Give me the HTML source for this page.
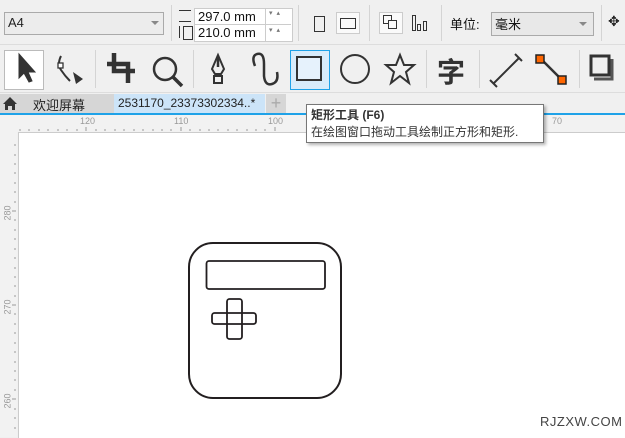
<!DOCTYPE html><html><head><meta charset="utf-8"><style>
body{margin:0;width:625px;height:437px;overflow:hidden;background:#f0f0f0;font-family:"Liberation Sans","Noto Sans CJK SC",sans-serif;position:relative}
.a{position:absolute}
.box{position:absolute;background:#fff;border:1px solid #bbb}
.sep{position:absolute;width:1px;background:#d4d4d4}
</style></head><body>
<!-- property bar -->
<div class="a" style="left:0;top:0;width:625px;height:44px;background:#f0f0f0;border-bottom:1px solid #ddd"></div>
<div class="box" style="left:4px;top:12px;width:158px;height:21px;background:#ececec;border-color:#aaa"></div>
<div class="a" style="left:8px;top:15px;font-size:13px;color:#222">A4</div>
<div class="a" style="left:151px;top:21px;border-left:4px solid transparent;border-right:4px solid transparent;border-top:4px solid #888"></div>
<div class="sep" style="left:171px;top:5px;height:36px"></div>
<div class="a" style="left:179px;top:10px;width:12px;height:10px;border-top:1px solid #333;border-bottom:1px solid #333"></div>
<div class="a" style="left:183px;top:26px;width:8px;height:12px;border-left:1px solid #333;border-right:1px solid #333;border-top:1px solid #333;border-bottom:1px solid #333"></div>
<div class="a" style="left:179px;top:26px;width:1px;height:12px;background:#333"></div>
<div class="box" style="left:194px;top:8px;width:97px;height:32px;border-color:#ccc"></div>
<div class="a" style="left:195px;top:24px;width:96px;height:1px;background:#ccc"></div>
<div class="a" style="left:265px;top:8px;width:1px;height:33px;background:#ccc"></div>
<div class="a" style="left:198px;top:9px;font-size:13px;color:#111">297.0 mm</div>
<div class="a" style="left:198px;top:25px;font-size:13px;color:#111">210.0 mm</div>
<div class="a" style="left:269px;top:9px;font-size:7px;color:#777;letter-spacing:4px">▾▴</div>
<div class="a" style="left:269px;top:26px;font-size:7px;color:#777;letter-spacing:4px">▾▴</div>
<div class="sep" style="left:298px;top:5px;height:36px"></div>
<div class="a" style="left:314px;top:16px;width:9px;height:14px;border:1px solid #333"></div>
<div class="a" style="left:336px;top:12px;width:22px;height:20px;border:1px solid #ccc;background:#fafafa"></div>
<div class="a" style="left:340px;top:18px;width:14px;height:9px;border:1px solid #333"></div>
<div class="sep" style="left:369px;top:5px;height:36px"></div>
<div class="a" style="left:379px;top:12px;width:22px;height:20px;border:1px solid #ccc;background:#fafafa"></div>
<div class="a" style="left:383px;top:15px;width:7px;height:7px;border:1px solid #333"></div>
<div class="a" style="left:388px;top:20px;width:7px;height:7px;border:1px solid #333;background:#fafafa"></div>
<div class="a" style="left:412px;top:15px;width:2px;height:14px;border:1px solid #333"></div>
<div class="a" style="left:417px;top:24px;width:2px;height:5px;border:1px solid #333"></div>
<div class="a" style="left:423px;top:21px;width:2px;height:8px;border:1px solid #333"></div>
<div class="sep" style="left:441px;top:5px;height:36px"></div>
<div class="a" style="left:450px;top:14px;font-size:13px;color:#111">单位:</div>
<div class="box" style="left:491px;top:12px;width:101px;height:22px;background:#e8e8e8;border-color:#aaa"></div>
<div class="a" style="left:495px;top:14px;font-size:13px;color:#111">毫米</div>
<div class="a" style="left:579px;top:22px;border-left:4px solid transparent;border-right:4px solid transparent;border-top:4px solid #888"></div>
<div class="sep" style="left:601px;top:5px;height:36px"></div>
<div class="a" style="left:608px;top:13px;font-size:14px;color:#222">✥</div>
<!-- toolbox -->
<div class="a" style="left:0;top:45px;width:625px;height:47px;background:#f0f0f0;border-bottom:1px solid #ddd"></div>
<div class="a" style="left:4px;top:50px;width:38px;height:38px;background:#fff;border:1px solid #bbb"></div>
<div class="a" style="left:290px;top:50px;width:38px;height:38px;background:#d8ecfb;border:1px solid #1fa2e8"></div>
<svg class="a" style="left:0;top:44px" width="625" height="48" fill="none" stroke="#333" stroke-width="2.5">
<path d="M19 10 L19 34 L24 29 L29 38 L32 37 L28 28 L35 28 Z" fill="#333" stroke-width="1"/>
<path d="M61 12 Q57 20 61 26 Q65 32 70 37" stroke-width="2"/><rect x="58" y="19" width="5" height="5" fill="#fff" stroke-width="1.3"/><path d="M73 28 L83 35 L76 40Z" fill="#333" stroke="none"/>
<path d="M114 9 V27 H135 M107 20 H128 V39" stroke-width="4.5"/>
<circle cx="165" cy="25" r="11" stroke-width="2.5"/><path d="M173 33 L182 42" stroke-width="3.5"/>
<path d="M218 11 L212 25 L215 30 L221 30 L224 25 Z" stroke-width="2"/><rect x="214" y="32" width="8" height="7" stroke-width="2"/><path d="M218 12 V23"/>
<path d="M255 22 Q251 12 257 10 Q264 8 264 20 L264 32 Q265 42 272 40 Q279 38 277 28" stroke-width="2.5"/>
<rect x="297" y="55" width="0" height="0"/>
<circle cx="355" cy="25" r="14" stroke-width="2"/>
<path d="M400 11 L404 21 L414 21 L406 28 L409 39 L400 32 L391 39 L394 28 L386 21 L396 21 Z" stroke-width="2"/>
<path d="M493 40 L519 14 M490 36 L497 43 M515 10 L522 17" stroke-width="2"/>
<path d="M541 15 L562 36" stroke-width="2.5"/><rect x="536" y="11" width="8" height="8" fill="#f60" stroke="#222" stroke-width="1.5"/><rect x="558" y="32" width="8" height="8" fill="#f60" stroke="#222" stroke-width="1.5"/>
<path d="M591 12 H609 V31 H591 Z" stroke-width="3"/><path d="M612 15 V35 H594" stroke-width="3" stroke="#555"/>
</svg>
<div class="a" style="left:437px;top:51px;font-size:28px;font-weight:bold;color:#333">字</div>
<div class="a" style="left:296px;top:56px;width:26px;height:25px;border:2.5px solid #333;box-sizing:border-box;background:#e6f2fc"></div>
<div class="sep" style="left:95px;top:50px;height:38px"></div>
<div class="sep" style="left:193px;top:50px;height:38px"></div>
<div class="sep" style="left:426px;top:50px;height:38px"></div>
<div class="sep" style="left:479px;top:50px;height:38px"></div>
<div class="sep" style="left:579px;top:50px;height:38px"></div>
<!-- tabs -->
<div class="a" style="left:0;top:93px;width:625px;height:21px;background:#f0f0f0"></div>
<div class="a" style="left:0;top:94px;width:114px;height:19px;background:#d6d6d6"></div>
<svg class="a" style="left:2px;top:96px" width="16" height="15"><path d="M1 8 L8 1 L15 8 L13 8 L13 14 L10 14 L10 10 L6 10 L6 14 L3 14 L3 8 Z" fill="#333"/></svg>
<div class="a" style="left:33px;top:95px;font-size:13px;color:#222">欢迎屏幕</div>
<div class="a" style="left:114px;top:94px;width:151px;height:19px;background:#cce4f8"></div>
<div class="a" style="left:118px;top:96px;font-size:12px;color:#222">2531170_23373302334..*</div>
<div class="a" style="left:266px;top:94px;width:20px;height:19px;background:#d6d6d6;color:#aaa;font-size:18px;text-align:center;line-height:18px">+</div>
<div class="a" style="left:0;top:113px;width:625px;height:2px;background:#1fa2e8"></div>
<!-- rulers -->
<div class="a" style="left:0;top:115px;width:625px;height:17px;background:#f2f2f2"></div>
<div class="a" style="left:0;top:115px;width:17px;height:322px;background:#f2f2f2"></div>
<div class="a" style="left:18px;top:132px;width:607px;height:305px;background:#fff;border-left:1px solid #ccc;border-top:1px solid #ccc"></div>
<div class="a" style="left:80px;top:116px;font-size:9px;color:#999">120</div>
<div class="a" style="left:174px;top:116px;font-size:9px;color:#999">110</div>
<div class="a" style="left:268px;top:116px;font-size:9px;color:#999">100</div>
<div class="a" style="left:552px;top:116px;font-size:9px;color:#999">70</div>
<div class="a" style="left:0;top:208px;font-size:9px;color:#999;transform:rotate(-90deg)">280</div>
<div class="a" style="left:0;top:302px;font-size:9px;color:#999;transform:rotate(-90deg)">270</div>
<div class="a" style="left:0;top:396px;font-size:9px;color:#999;transform:rotate(-90deg)">260</div>
<svg class="a" style="left:0;top:115px" width="625" height="322"><g stroke="#999"><path d="M20 16v-2M29 16v-2M39 16v-2M48 16v-2M58 16v-2M67 16v-2M77 16v-2M86 16v-4M96 16v-2M105 16v-2M115 16v-2M124 16v-2M134 16v-2M143 16v-2M153 16v-2M162 16v-2M171 16v-2M181 16v-4M190 16v-2M200 16v-2M209 16v-2M218 16v-2M228 16v-2M237 16v-2M247 16v-2M256 16v-2M265 16v-2M275 16v-4"/><path d="M16 30h-2M16 40h-2M16 49h-2M16 58h-2M16 68h-2M16 77h-2M16 87h-2M16 96h-4M16 105h-2M16 115h-2M16 124h-2M16 134h-2M16 143h-2M16 153h-2M16 162h-2M16 171h-2M16 181h-2M16 190h-4M16 199h-2M16 209h-2M16 218h-2M16 228h-2M16 237h-2M16 247h-2M16 256h-2M16 265h-2M16 275h-2M16 284h-4M16 294h-2M16 303h-2M16 313h-2"/></g></svg>
<!-- drawing -->
<svg class="a" style="left:0;top:0" width="625" height="437" fill="none" stroke="#231f20" stroke-width="2">
<rect x="189" y="243" width="152" height="155" rx="24"/>
<rect x="206.5" y="261" width="118.5" height="28" rx="2.5" stroke-width="1.8"/>
<rect x="227" y="299" width="15" height="40" rx="2.5" stroke-width="1.8"/>
<rect x="212" y="313" width="44" height="11" rx="2.5" stroke-width="1.8"/>
</svg>
<div class="a" style="left:540px;top:414px;font-size:13px;color:#444;letter-spacing:0.5px">RJZXW.COM</div>
<!-- tooltip -->
<div class="a" style="left:306px;top:104px;width:236px;height:37px;background:#fff;border:1px solid #777;box-shadow:2px 2px 3px rgba(0,0,0,.3)"></div>
<div class="a" style="left:311px;top:106px;font-size:12px;font-weight:bold;color:#333">矩形工具 (F6)</div>
<div class="a" style="left:311px;top:123px;font-size:12px;color:#333;white-space:nowrap">在绘图窗口拖动工具绘制正方形和矩形.</div>
</body></html>
